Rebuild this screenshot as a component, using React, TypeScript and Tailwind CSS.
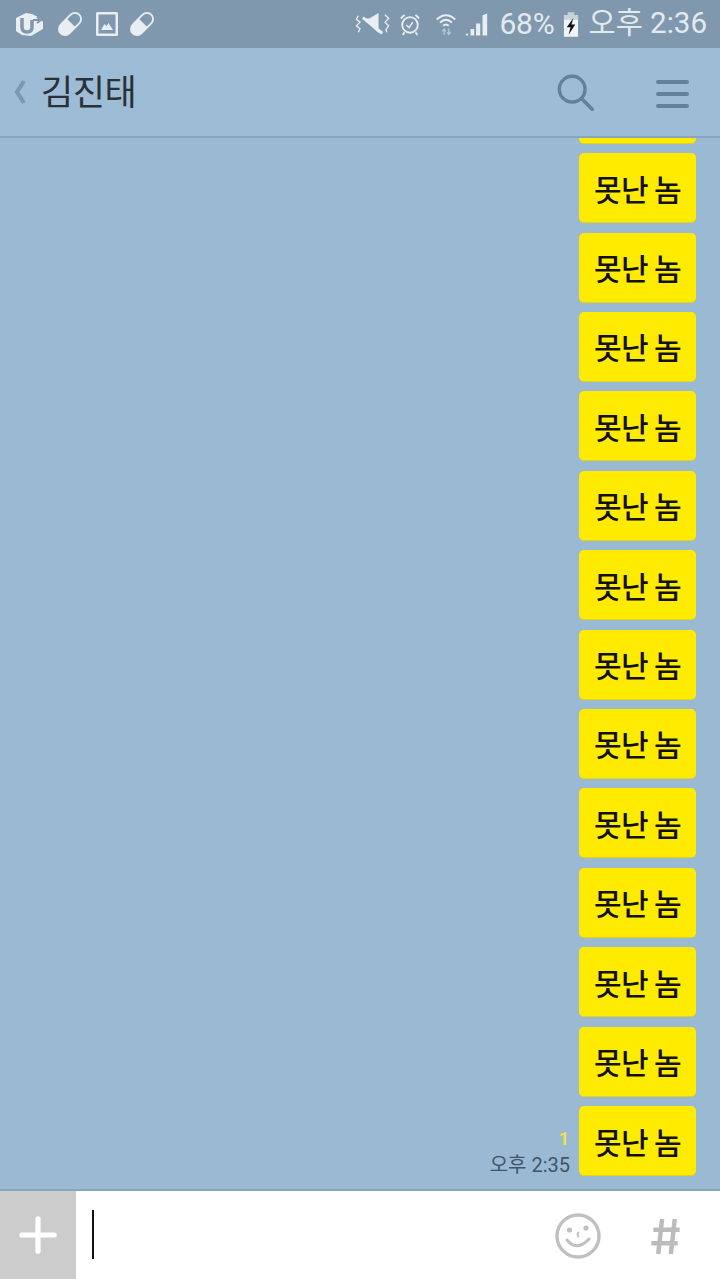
import React from "react";

function Bubble({ empty }: { empty?: boolean }) {
  return (
    <div className="w-[117px] h-[70px] shrink-0 rounded-[5px] bg-[#ffeb00] border-b border-[#e3d21a] flex items-center justify-center text-[30px] leading-none tracking-[-0.6px] font-medium text-[#111] font-['Noto_Sans_CJK_KR',sans-serif]">
      {empty ? null : "못난 놈"}
    </div>
  );
}

function Pill() {
  return (
    <svg width="30" height="30" viewBox="0 0 30 30">
      <g transform="rotate(-45 15 15)">
        <rect x="1" y="8" width="28" height="14" rx="7" fill="#e9eef2" />
        <path d="M16.5 9.8h5.5a5.2 5.2 0 0 1 0 10.4H16.5z" fill="#7f98ae" />
      </g>
    </svg>
  );
}

function StatusBar() {
  return (
    <div className="h-[48px] shrink-0 bg-[#7f98ae] flex items-center justify-between pl-[14px] pr-[13px] text-[#e3eaef]">
      <div className="flex items-center">
        <svg width="30" height="26" viewBox="0 0 30 26">
          <path d="M2 7 L12 2 L18 3 L26 7 L29 11 V18 L17 25 L8 24 L2 20 Z" fill="#e9eef2" />
          <path d="M8 7 V16 Q8 21 13 21 Q18 21 18 16 V9" fill="none" stroke="#7f98ae" strokeWidth="3.5" />
          <path d="M19 9 H25 M23 6 L27 9 L23 12" fill="none" stroke="#7f98ae" strokeWidth="2" />
        </svg>
        <div className="ml-[11px]"><Pill /></div>
        <svg width="22" height="24" viewBox="0 0 22 24" className="ml-[11px]">
          <rect x="0" y="0" width="22" height="24" rx="1.5" fill="#e9eef2" />
          <rect x="2.5" y="2.5" width="17" height="19" fill="#7f98ae" />
          <path d="M5 18 L8.5 12 L10.5 14 L12.5 11 L17 18 Z" fill="#e9eef2" />
        </svg>
        <div className="ml-[9px]"><Pill /></div>
      </div>
      <div className="flex items-center">
        <svg width="36" height="24" viewBox="0 0 38 26">
          <path d="M9 7 H15 L25 1 V23 Z" fill="#e9eef2" />
          <path d="M8 6 L29 23" stroke="#e9eef2" strokeWidth="3.2" />
          <path d="M3 4 L1 8 L5 11 L1 15 L5 18 L3 22" fill="none" stroke="#e9eef2" strokeWidth="1.4" />
          <path d="M32 3 L36 7 L32 11 L36 15 L33 19 L34 22" fill="none" stroke="#e9eef2" strokeWidth="1.4" />
        </svg>
        <svg width="22" height="24" viewBox="0 0 24 26" className="ml-[8px]">
          <circle cx="12" cy="14" r="8.5" fill="none" stroke="#e9eef2" strokeWidth="2" />
          <path d="M8 14 L11 17 L15 11" fill="none" stroke="#e9eef2" strokeWidth="1.6" />
          <path d="M2 7 L6 3 M22 7 L18 3 M6 22 L4 25 M18 22 L20 25" stroke="#e9eef2" strokeWidth="2" />
        </svg>
        <svg width="22" height="24" viewBox="0 0 24 26" className="ml-[14px]">
          <path d="M2 8 Q12 -1 22 8" fill="none" stroke="#e9eef2" strokeWidth="2.2" />
          <path d="M5.5 11.5 Q12 5 18.5 11.5" fill="none" stroke="#e9eef2" strokeWidth="2.2" />
          <path d="M9 15 Q12 12 15 15" fill="none" stroke="#e9eef2" strokeWidth="2.2" />
          <path d="M10 25 V19 M8 21 L10 18.5 L12 21 M15 18 V24 M13 22 L15 24.5 L17 22" fill="none" stroke="#b9c7d3" strokeWidth="1.4" />
        </svg>
        <svg width="24" height="25" viewBox="0 0 26 26" className="ml-[8px]">
          <path d="M1 25 V23 H3.5 V25 Z M6 25 V18 H10 V25 Z M12 25 V12 H16.5 V25 Z M19 25 V3 L24 1 V25 Z" fill="#e9eef2" />
        </svg>
        <span className="ml-[10px] text-[30px] leading-none tracking-[-0.2px] font-['Roboto',sans-serif]">68%</span>
        <svg width="16" height="25" viewBox="0 0 17 26" className="ml-[8px]">
          <rect x="5" y="0" width="7" height="3" fill="#c6d2dc" />
          <rect x="1" y="3" width="15" height="23" fill="#f2f5f7" />
          <rect x="1" y="3" width="15" height="5" fill="#c6d2dc" />
          <path d="M11 6 L4 16 H8 L6 24 L13 13 H9 Z" fill="#111" />
        </svg>
        <span className="ml-[10px] text-[29.5px] leading-none font-['Roboto','Noto_Sans_CJK_KR',sans-serif]">오후 2:36</span>
      </div>
    </div>
  );
}

function Header() {
  return (
    <div className="h-[90px] shrink-0 bg-[#9dbcd5] border-b-2 border-[#87a5be] flex items-center">
      <svg width="14" height="26" viewBox="0 0 14 26" className="ml-[13px]">
        <path d="M11 2 L4 13 L11 24" fill="none" stroke="#7a98b0" strokeWidth="4" />
      </svg>
      <span className="ml-[14px] mb-[6px] text-[35px] leading-none text-[#2a3238] font-normal font-['Noto_Sans_CJK_KR',sans-serif] tracking-[-0.5px]">김진태</span>
      <svg width="40" height="42" viewBox="0 0 42 42" className="ml-auto mt-[1px] mr-[-1px]">
        <circle cx="17" cy="17" r="13.5" fill="none" stroke="#64819a" strokeWidth="3.6" />
        <path d="M27 27 L38 38" stroke="#64819a" strokeWidth="3.8" strokeLinecap="round" />
      </svg>
      <div className="ml-[61px] mr-[31px] w-[33px] flex flex-col gap-[8px] mt-[3px]">
        <div className="h-[4px] rounded-full bg-[#64819a]" />
        <div className="h-[4px] rounded-full bg-[#64819a]" />
        <div className="h-[4px] rounded-full bg-[#64819a]" />
      </div>
    </div>
  );
}

function Chat() {
  return (
    <div className="flex-1 min-h-0 bg-[#9abad3] overflow-hidden flex flex-col justify-end items-end gap-[9.42px] pr-[24px] pb-[13px]">
      <Bubble empty />
      {Array.from({ length: 12 }).map((_, i) => (
        <Bubble key={i} />
      ))}
      <div className="relative shrink-0">
        <Bubble />
        <div className="absolute right-[126px] bottom-[-1px] flex flex-col items-end whitespace-nowrap">
          <span className="mr-[1px] mb-[2px] text-[18px] leading-[24px] font-bold text-[#f0e23c] font-['Roboto',sans-serif]">1</span>
          <span className="text-[20px] leading-[24px] text-[#3f5568] font-['Roboto','Noto_Sans_CJK_KR',sans-serif]">오후 2:35</span>
        </div>
      </div>
    </div>
  );
}

function InputBar() {
  return (
    <div className="h-[90px] shrink-0 bg-white border-t-2 border-[#8ba6bc] flex">
      <div className="w-[76px] bg-[#cccccc] flex items-center justify-center">
        <svg width="38" height="38" viewBox="0 0 40 40">
          <path d="M20 3 V37 M3 20 H37" stroke="#fff" strokeWidth="5.5" strokeLinecap="round" />
        </svg>
      </div>
      <div className="ml-[16px] mt-[19px] w-[2px] h-[49px] bg-[#111]" />
      <svg width="46" height="46" viewBox="0 0 46 46" className="ml-auto mt-[22px]">
        <circle cx="23" cy="23" r="21" fill="none" stroke="#c0c0c0" strokeWidth="3.4" />
        <circle cx="14.5" cy="17" r="2.6" fill="#c0c0c0" />
        <circle cx="31" cy="15" r="2.6" fill="#c0c0c0" />
        <path d="M12 27 Q22 39 34 26" fill="none" stroke="#c0c0c0" strokeWidth="3" strokeLinecap="round" />
        <path d="M24 19 Q21 22 24 24" fill="none" stroke="#c0c0c0" strokeWidth="2" />
      </svg>
      <svg width="30" height="37" viewBox="0 0 30 38" className="ml-[50px] mr-[39px] mt-[27px]">
        <path d="M11 1 L7 37 M24 1 L20 37 M2 12 H29 M0 26 H27" fill="none" stroke="#bcbcbc" strokeWidth="4.6" />
      </svg>
    </div>
  );
}

export default function App() {
  return (
    <div className="w-[720px] h-[1279px] flex flex-col overflow-hidden">
      <StatusBar />
      <Header />
      <Chat />
      <InputBar />
    </div>
  );
}
